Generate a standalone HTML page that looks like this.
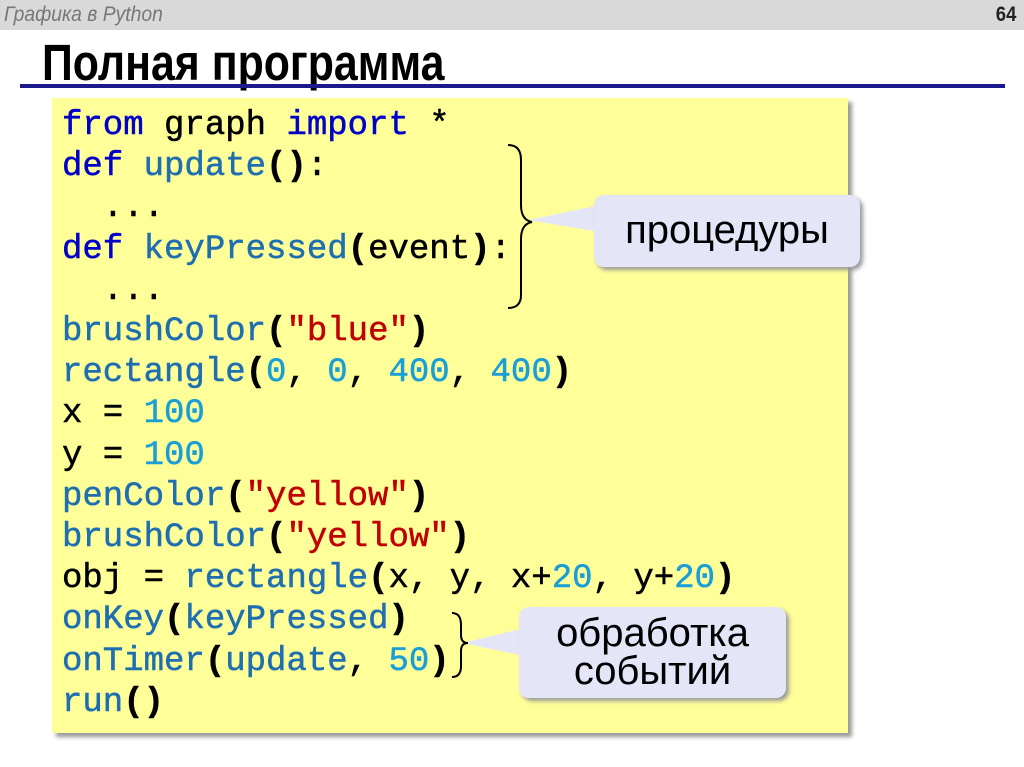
<!DOCTYPE html>
<html><head><meta charset="utf-8"><style>
body{margin:0;width:1024px;height:767px;background:#fff;position:relative;overflow:hidden;font-family:"Liberation Sans",sans-serif}
.hdr{position:absolute;left:0;top:0;width:1024px;height:30px;background:#d9d9d9}
.hdr .t{position:absolute;left:4px;top:3px;font-size:21px;font-style:italic;color:#777;transform:scaleX(.92);transform-origin:left}
.hdr .n{position:absolute;right:8px;top:3px;font-size:21px;font-weight:bold;color:#222;transform:scaleX(.88);transform-origin:right}
.title{position:absolute;left:42px;top:33px;font-size:51px;font-weight:bold;color:#000;transform:scaleX(.84);transform-origin:left}
.line{position:absolute;left:20px;top:84px;width:985px;height:4px;background:#1a1a8c}
.box{position:absolute;left:52px;top:98px;width:796px;height:635px;background:#ffff99;box-shadow:4px 4px 4px #999}
.code{position:absolute;left:62px;top:106px;font-family:"Liberation Mono",monospace;font-size:34px;line-height:41.2px;white-space:pre;color:#000;-webkit-text-stroke:0.5px}
.k{color:#0000c8}.f{color:#1f6fb0}.n{color:#1a9ed6}.s{color:#c00000}b{font-weight:bold}
.call{position:absolute;background:#e4e6f8;border-radius:10px;box-shadow:3px 3px 4px #999;font-size:40px;color:#000;text-align:center;line-height:38px}
</style></head><body>
<div class="hdr"><span class="t">Графика в Python</span><span class="n">64</span></div>
<div class="title">Полная программа</div>
<div class="line"></div>
<div class="box"></div>
<div class="code"><span class="k">from</span> graph <span class="k">import</span> *
<span class="k">def</span> <span class="f">update</span><b>()</b>:
  ...
<span class="k">def</span> <span class="f">keyPressed</span><b>(</b>event<b>)</b>:
  ...
<span class="f">brushColor</span><b>(</b><span class="s">"blue"</span><b>)</b>
<span class="f">rectangle</span><b>(</b><span class="n">0</span>, <span class="n">0</span>, <span class="n">400</span>, <span class="n">400</span><b>)</b>
x = <span class="n">100</span>
y = <span class="n">100</span>
<span class="f">penColor</span><b>(</b><span class="s">"yellow"</span><b>)</b>
<span class="f">brushColor</span><b>(</b><span class="s">"yellow"</span><b>)</b>
obj = <span class="f">rectangle</span><b>(</b>x, y, x+<span class="n">20</span>, y+<span class="n">20</span><b>)</b>
<span class="f">onKey</span><b>(</b><span class="f">keyPressed</span><b>)</b>
<span class="f">onTimer</span><b>(</b><span class="f">update</span>, <span class="n">50</span><b>)</b>
<span class="f">run</span><b>()</b></div>
<svg style="position:absolute;left:0;top:0" width="1024" height="767">
<polygon points="528,220 600,205 600,232" fill="#e4e6f8"/>
<path d="M508,145 Q521,145 521,160 L521,205 Q521,220 532,222 Q521,224 521,239 L521,295 Q521,308 508,308" fill="none" stroke="#000" stroke-width="2"/>
<polygon points="462,643 525,628 525,656" fill="#e4e6f8"/>
<path d="M452,613 Q461,613 461,625 L461,635 Q461,643 468,643 Q461,643 461,651 L461,666 Q461,677 452,677" fill="none" stroke="#000" stroke-width="2"/>
</svg>
<div class="call" style="left:594px;top:195px;width:266px;height:72px;line-height:70px">процедуры</div>
<div class="call" style="left:519px;top:607px;width:267px;height:91px;padding-top:7px;box-sizing:border-box">обработка<br>событий</div>
</body></html>
